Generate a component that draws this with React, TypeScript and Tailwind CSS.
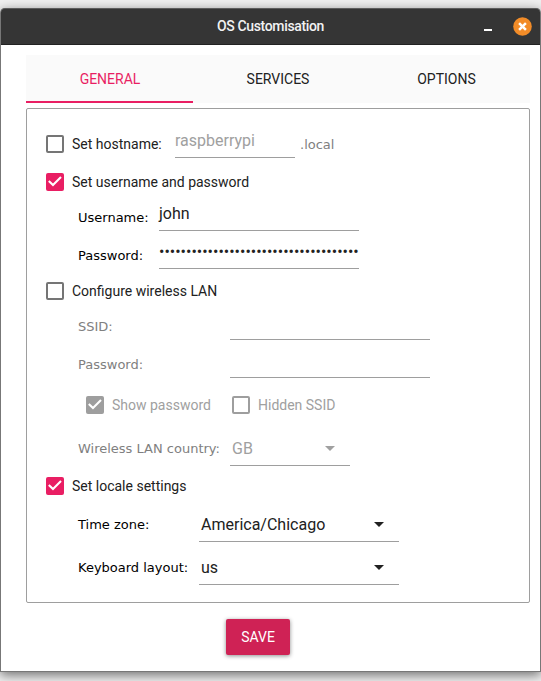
import { useState, type ReactNode } from 'react';
import clsx from 'clsx';

const TABS = ['GENERAL', 'SERVICES', 'OPTIONS'];
const PASSWORD_LENGTH = 37;

function Checkbox({
  label,
  checked = false,
  disabled = false,
}: {
  label: string;
  checked?: boolean;
  disabled?: boolean;
}) {
  return (
    <div
      role="checkbox"
      aria-checked={checked}
      className={clsx(
        'flex items-center gap-2 text-sm whitespace-nowrap',
        disabled ? 'text-[#a0a0a0]' : 'text-[#212121]'
      )}
    >
      <span
        className={clsx(
          'w-[18px] h-[18px] shrink-0 rounded-[2px]',
          checked && (disabled ? 'bg-[#9e9e9e]' : 'bg-[#e91e63]'),
          !checked && 'border-2',
          !checked && (disabled ? 'border-[#9e9e9e]' : 'border-[#757575]')
        )}
      >
        {checked && (
          <svg width="18" height="18" viewBox="0 0 18 18" fill="none">
            <path d="M2.8 7.9 7 12.1 15 4.1" stroke="white" strokeWidth="2.1" />
          </svg>
        )}
      </span>
      <span>{label}</span>
    </div>
  );
}

function Label({
  children,
  className,
}: {
  children: ReactNode;
  className: string;
}) {
  return (
    <span
      className={clsx(
        "shrink-0 whitespace-nowrap font-['DejaVu_Sans',sans-serif] text-[13px] leading-4",
        className
      )}
    >
      {children}
    </span>
  );
}

function TextField({
  className,
  children,
}: {
  className: string;
  children?: ReactNode;
}) {
  return (
    <div
      className={clsx(
        'h-7 shrink-0 border-b border-[#9e9e9e] text-base leading-[22px] whitespace-nowrap',
        className
      )}
    >
      {children}
    </div>
  );
}

function Select({
  value,
  className,
}: {
  value: string;
  className: string;
}) {
  return (
    <div
      className={clsx(
        'h-[34px] shrink-0 flex items-center justify-between border-b border-[#9e9e9e] pl-[2px] pr-[15px] text-base leading-5',
        className
      )}
    >
      <span>{value}</span>
      <svg width="10" height="5" viewBox="0 0 10 5" fill="currentColor">
        <path d="M0 0h10L5 5z" />
      </svg>
    </div>
  );
}

function TitleBar() {
  return (
    <div className="h-[37px] shrink-0 flex items-center bg-[#353535] border-t border-t-[#5c5c5c] border-b border-b-[#222] rounded-t-[4px] pr-2">
      <div className="w-[56px]" />
      <h1 className="flex-1 pb-px text-center text-[#f2f2f2] font-medium text-sm tracking-[-0.35px]">
        OS Customisation
      </h1>
      <div className="w-[48px] flex items-center justify-between">
        <svg width="8" height="18" viewBox="0 0 8 18">
          <path d="M0 12h8" stroke="white" strokeWidth="2" />
        </svg>
        <svg width="19" height="19" viewBox="0 0 19 19">
          <circle cx="9.5" cy="9.5" r="9.3" fill="#f28c28" />
          <path
            d="m6.1 6.1 6.8 6.8m0-6.8-6.8 6.8"
            stroke="white"
            strokeWidth="2.5"
          />
        </svg>
      </div>
    </div>
  );
}

export default function App() {
  const [tab, setTab] = useState('GENERAL');

  return (
    <div className="w-[541px] h-[681px] overflow-hidden bg-[#f0f0f0] pt-2 font-[Roboto,sans-serif]">
      <div className="h-[664px] flex flex-col bg-white border-x border-b border-[#777] rounded-t-[5px] shadow-[0_3px_12px_rgba(0,0,0,0.55)]">
        <TitleBar />

        <div className="mt-[10px] ml-[25px] w-[504px] h-12 shrink-0 grid grid-cols-[167px_169px_168px] bg-[#fafafa]">
          {TABS.map((name) => (
            <button
              key={name}
              onClick={() => setTab(name)}
              className={clsx(
                'border-b-2 pt-[2px] pl-px text-sm leading-5',
                tab === name
                  ? 'border-[#e91e63] text-[#e91e63]'
                  : 'border-transparent text-[#212121]'
              )}
            >
              {name}
            </button>
          ))}
        </div>

        <div className="mt-[5px] ml-[25px] w-[504px] h-[495px] shrink-0 border border-[#9e9e9e] rounded-[2px] pt-4 pl-[19px] text-[#212121]">
          <div className="h-[38px] flex items-center">
            <div className="w-[129px]">
              <Checkbox label="Set hostname:" />
            </div>
            <TextField className="w-[120px] self-end mb-[5px] text-[#a0a0a0]">
              raspberrypi
            </TextField>
            <Label className="ml-[5px] pt-px text-[#808080]">.local</Label>
          </div>

          <div className="h-[38px] flex items-center">
            <Checkbox label="Set username and password" checked />
          </div>
          <div className="h-[30px] pl-8 flex items-end">
            <Label className="w-[81px] pb-[5px] text-black">Username:</Label>
            <TextField className="w-[200px]">john</TextField>
          </div>
          <div className="h-[38px] pl-8 flex items-end">
            <Label className="w-[81px] pb-[5px] text-black">Password:</Label>
            <TextField className="w-[200px]">
              {'•'.repeat(PASSWORD_LENGTH)}
            </TextField>
          </div>

          <div className="h-[44px] flex items-center">
            <Checkbox label="Configure wireless LAN" />
          </div>
          <div className="h-[27px] pl-8 flex items-end text-[#808080]">
            <Label className="w-[152px] pb-[5px]">SSID:</Label>
            <TextField className="w-[200px]" />
          </div>
          <div className="h-[38px] pl-8 flex items-end text-[#808080]">
            <Label className="w-[152px] pb-[5px]">Password:</Label>
            <TextField className="w-[200px]" />
          </div>
          <div className="h-[54px] pl-10 flex items-center">
            <div className="w-[146px]">
              <Checkbox label="Show password" checked disabled />
            </div>
            <Checkbox label="Hidden SSID" disabled />
          </div>
          <div className="h-[34px] pl-8 flex items-end text-[#808080]">
            <Label className="w-[152px] pb-[9px]">Wireless LAN country:</Label>
            <Select className="w-[120px] text-[#a0a0a0]" value="GB" />
          </div>

          <div className="h-10 flex items-center">
            <Checkbox label="Set locale settings" checked />
          </div>
          <div className="h-9 pl-8 flex items-end">
            <Label className="w-[121px] pb-[9px] text-black">Time zone:</Label>
            <Select className="w-[200px]" value="America/Chicago" />
          </div>
          <div className="h-[43px] pl-8 flex items-end">
            <Label className="w-[121px] pb-[9px] text-black">
              Keyboard layout:
            </Label>
            <Select className="w-[200px]" value="us" />
          </div>
        </div>

        <button className="mt-4 ml-[225px] w-16 h-9 shrink-0 rounded-[2px] bg-[#cf2255] text-white text-sm shadow-[0_1px_4px_rgba(0,0,0,0.45)]">
          SAVE
        </button>
      </div>
    </div>
  );
}
